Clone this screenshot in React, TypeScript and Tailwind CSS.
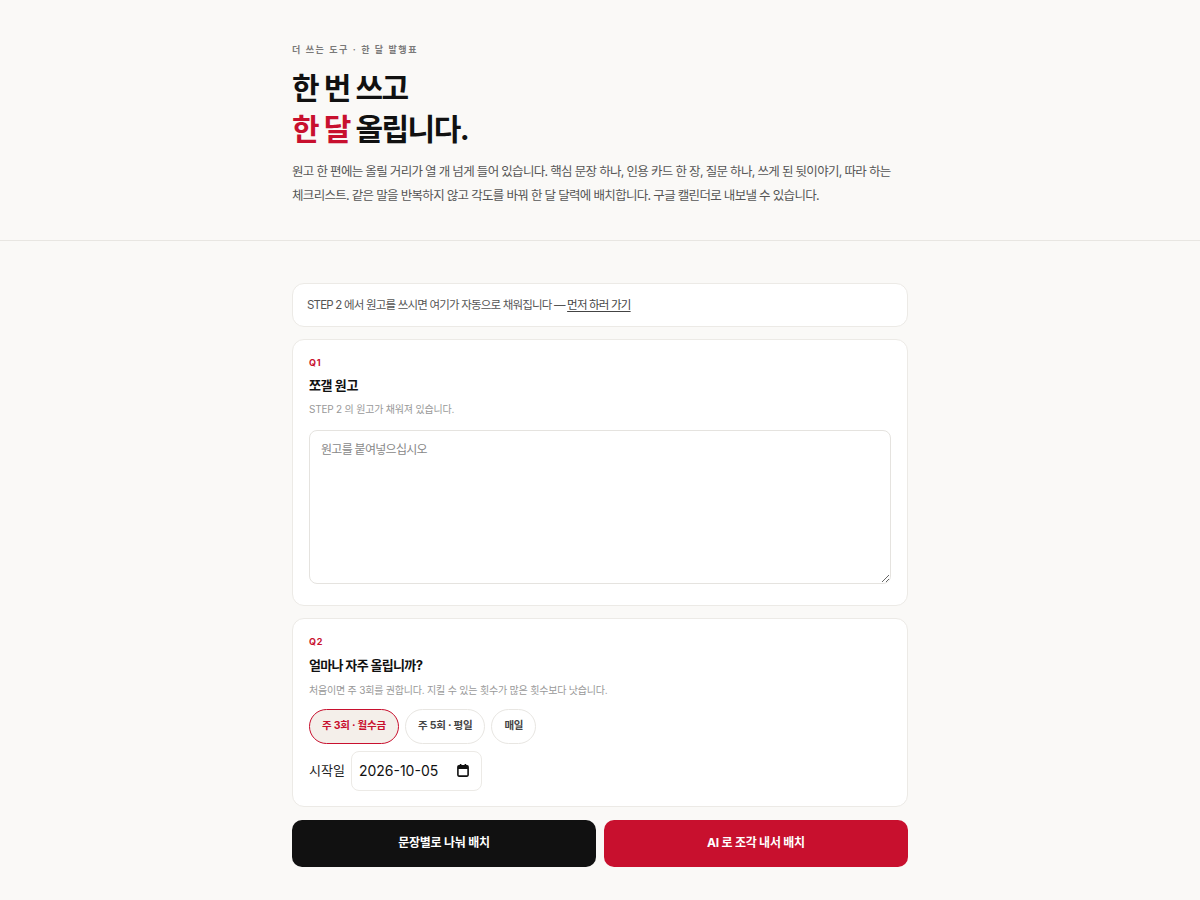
import React from "react";

const font = { fontFamily: "Inter, 'Noto Sans CJK KR', sans-serif" };

function CalendarIcon() {
  return (
    <svg width="12" height="13" viewBox="0 0 12 13" fill="none" aria-hidden="true">
      <rect x="0.9" y="1.9" width="10.2" height="10.2" rx="1" stroke="#111" strokeWidth="1.6" />
      <rect x="1" y="2" width="10" height="3" fill="#111" />
      <rect x="2.8" y="0" width="1.6" height="2.6" fill="#111" />
      <rect x="7.6" y="0" width="1.6" height="2.6" fill="#111" />
    </svg>
  );
}

export default function App() {
  return (
    <div className="min-h-screen bg-[#faf9f7] text-[#111]" style={font}>
      <header className="border-b border-[#e8e6e2]">
        <div className="mx-auto w-[616px] pt-[43px] pb-[32px]">
          <div className="text-[9px] font-bold tracking-[0.18em] text-[#7a7a7a]">더 쓰는 도구 · 한 달 발행표</div>
          <h1 className="mt-[11px] text-[30px] font-bold leading-[41px] tracking-[-0.05em]">
            한 번 쓰고
            <br />
            <span className="text-[#c8102e]">한 달</span> 올립니다.
          </h1>
          <p className="mt-[10px] break-keep text-[12.5px] leading-[24px] tracking-[-0.055em] text-[#555]">
            원고 한 편에는 올릴 거리가 열 개 넘게 들어 있습니다. 핵심 문장 하나, 인용 카드 한 장, 질문 하나, 쓰게 된 뒷이야기, 따라 하는 체크리스트. 같은 말을 반복하지 않고 각도를 바꿔 한 달 달력에 배치합니다. 구글 캘린더로 내보낼 수 있습니다.
          </p>
        </div>
      </header>
      <main className="mx-auto w-[616px] pt-[42px] pb-[34px] flex flex-col gap-[12px]">
        <div className="rounded-[12px] border border-[#eceae6] bg-white px-[14px] py-[13px] text-[11.5px] leading-[16px] tracking-[-0.07em] text-[#555]">
          STEP 2 에서 원고를 쓰시면 여기가 자동으로 채워집니다 — <a className="underline underline-offset-2 text-[#444]">먼저 하러 가기</a>
        </div>
        <div className="rounded-[12px] border border-[#eceae6] bg-white px-[16px] pt-[16px] pb-[21px]">
          <div className="text-[9px] font-bold tracking-[0.08em] text-[#c8102e]">Q1</div>
          <div className="mt-[7px] text-[13px] font-bold tracking-[-0.03em]">쪼갤 원고</div>
          <div className="mt-[6px] text-[10px] tracking-[-0.02em] text-[#999]">STEP 2 의 원고가 채워져 있습니다.</div>
          <textarea
            className="mt-[13px] block h-[154px] w-full resize-y rounded-[8px] border border-[#e5e3df] bg-white px-[11px] py-[10px] text-[12px] tracking-[-0.06em] text-[#111] placeholder:text-[#888] outline-none"
            placeholder="원고를 붙여넣으십시오"
            style={font}
          />
        </div>
        <div className="rounded-[12px] border border-[#eceae6] bg-white px-[16px] pt-[16px] pb-[15px]">
          <div className="text-[9px] font-bold tracking-[0.08em] text-[#c8102e]">Q2</div>
          <div className="mt-[8px] text-[13px] font-bold tracking-[-0.05em]">얼마나 자주 올립니까?</div>
          <div className="mt-[7px] text-[10px] tracking-[-0.02em] text-[#999]">처음이면 주 3회를 권합니다. 지킬 수 있는 횟수가 많은 횟수보다 낫습니다.</div>
          <div className="mt-[11px] flex gap-[6px]">
            <button className="h-[35px] rounded-full border border-[#c8102e] bg-[#f4efea] px-[12px] text-[10.5px] font-bold tracking-[-0.02em] text-[#c8102e]">주 3회 · 월수금</button>
            <button className="h-[35px] rounded-full border border-[#e8e6e2] bg-white px-[12px] text-[10.5px] font-bold tracking-[-0.02em] text-[#444]">주 5회 · 평일</button>
            <button className="h-[35px] rounded-full border border-[#e8e6e2] bg-white px-[12px] text-[10.5px] font-bold tracking-[-0.02em] text-[#444]">매일</button>
          </div>
          <div className="mt-[7px] flex items-center gap-[6px]">
            <span className="text-[13px] text-[#222]">시작일</span>
            <div className="flex h-[40px] w-[131px] items-center justify-between rounded-[8px] border border-[#eceae6] bg-white pl-[7px] pr-[12px] text-[14px] text-[#111]">
              <span>2026-10-05</span>
              <CalendarIcon />
            </div>
          </div>
        </div>
        <div className="mt-[1px] grid grid-cols-2 gap-[8px]">
          <button className="h-[47px] rounded-[10px] bg-[#111] text-[12px] font-bold tracking-[-0.02em] text-white">문장별로 나눠 배치</button>
          <button className="h-[47px] rounded-[10px] bg-[#c8102e] text-[12px] font-bold tracking-[-0.02em] text-white">AI 로 조각 내서 배치</button>
        </div>
      </main>
    </div>
  );
}
